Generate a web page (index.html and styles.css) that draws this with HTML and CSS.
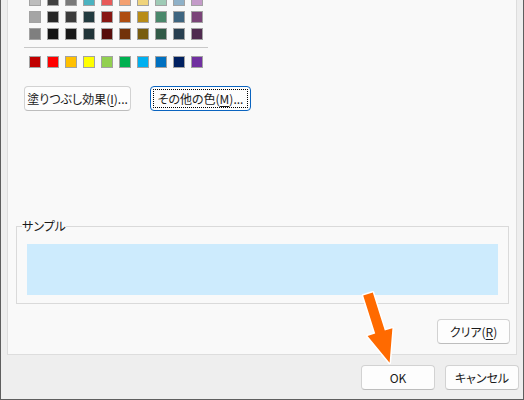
FILE: index.html
```html
<!DOCTYPE html>
<html lang="ja">
<head>
<meta charset="utf-8">
<title>色の設定</title>
<link rel="stylesheet" href="styles.css">
</head>
<body>
<div class="window">
  <div class="panel">
    <div class="swatches theme">
      <span class="sw" style="background:#bdbdbd"></span>
      <span class="sw" style="background:#404040"></span>
      <span class="sw" style="background:#7a7a7a"></span>
      <span class="sw" style="background:#4bb3c1"></span>
      <span class="sw" style="background:#e85a59"></span>
      <span class="sw" style="background:#f4a070"></span>
      <span class="sw" style="background:#f0d47c"></span>
      <span class="sw" style="background:#9fcbb6"></span>
      <span class="sw" style="background:#8fb1c8"></span>
      <span class="sw" style="background:#c49bc9"></span>

      <span class="sw" style="background-color:#a5a5a5"></span>
      <span class="sw" style="background-color:#262626"></span>
      <span class="sw" style="background-color:#3b3b3b"></span>
      <span class="sw pat" style="background-color:#1a3338"></span>
      <span class="sw" style="background-color:#871613"></span>
      <span class="sw" style="background-color:#ae4d10"></span>
      <span class="sw" style="background-color:#b88c17"></span>
      <span class="sw" style="background-color:#4a886b"></span>
      <span class="sw" style="background-color:#3e6580"></span>
      <span class="sw" style="background-color:#7a4478"></span>

      <span class="sw" style="background-color:#7f7f7f"></span>
      <span class="sw pat" style="background-color:#0a0a0a"></span>
      <span class="sw" style="background-color:#191919"></span>
      <span class="sw pat" style="background-color:#192d31"></span>
      <span class="sw" style="background-color:#560d0b"></span>
      <span class="sw" style="background-color:#72320a"></span>
      <span class="sw" style="background-color:#785c0f"></span>
      <span class="sw" style="background-color:#315a47"></span>
      <span class="sw" style="background-color:#283f50"></span>
      <span class="sw" style="background-color:#4f2b4f"></span>
    </div>
    <div class="divider"></div>
    <div class="swatches standard">
      <span class="sw" style="background:#c00000"></span>
      <span class="sw" style="background:#ff0000"></span>
      <span class="sw" style="background:#ffc000"></span>
      <span class="sw" style="background:#ffff00"></span>
      <span class="sw" style="background:#92d050"></span>
      <span class="sw" style="background:#00b050"></span>
      <span class="sw" style="background:#00b0f0"></span>
      <span class="sw" style="background:#0070c0"></span>
      <span class="sw" style="background:#002060"></span>
      <span class="sw" style="background:#7030a0"></span>
    </div>
    <div class="btn-row">
      <button class="btn fill-btn" type="button">塗りつぶし効果(<u>I</u>)...</button>
      <button class="btn more-btn focused" type="button">その他の色(<u>M</u>)...</button>
    </div>
    <fieldset class="sample">
      <legend>サンプル</legend>
      <div class="sample-fill"></div>
    </fieldset>
    <div class="clear-row">
      <button class="btn clear-btn" type="button">クリア(<u>R</u>)</button>
    </div>
  </div>
  <div class="footer">
    <button class="btn dlg-btn" type="button">OK</button>
    <button class="btn dlg-btn" type="button">キャンセル</button>
  </div>
  <svg class="arrow" width="524" height="400" viewBox="0 0 524 400" aria-hidden="true">
    <polygon points="363.2,295.5 372.8,292.5 384.8,330.6 392.4,328.2 389.6,362.7 367.6,336.0 375.2,333.6" fill="#ff6a00" stroke="#ffffff" stroke-width="3" stroke-linejoin="round" paint-order="stroke"/>
  </svg>
</div>
</body>
</html>
```

FILE: styles.css
```css
* {
  box-sizing: border-box;
}

html, body {
  margin: 0;
  padding: 0;
  background: #efefef;
}

body {
  font-family: "Noto Sans CJK JP", "Noto Sans", sans-serif;
  font-size: 12px;
  color: #1a1a1a;
  font-feature-settings: "palt";
}

.window {
  position: relative;
  width: 524px;
  height: 400px;
  background: #eeeeee;
  border-left: 1px solid #5e5e5e;
  border-right: 1px solid #5e5e5e;
  border-bottom: 1px solid #5e5e5e;
  display: flex;
  flex-direction: column;
  overflow: hidden;
}

.panel {
  margin-left: 6px;
  width: 510px;
  height: 355px;
  background: #f9f9f9;
  border: 1px solid #dddddd;
  border-top: none;
  display: flex;
  flex-direction: column;
  align-items: flex-start;
  overflow: hidden;
  flex: none;
}

.swatches {
  display: grid;
  grid-template-columns: repeat(10, 12px);
  grid-auto-rows: 12px;
  column-gap: 6px;
  row-gap: 5px;
  margin-left: 21px;
}

.theme {
  margin-top: -6px;
}

.standard {
  margin-top: 8px;
}

.sw {
  display: block;
  width: 12px;
  height: 12px;
  border: 1px solid #a2a2a2;
}

.pat {
  background-image: radial-gradient(circle, rgba(255, 255, 255, 0.12) 0.5px, transparent 0.8px);
  background-size: 2px 2px;
}

.divider {
  margin-top: 7px;
  margin-left: 16px;
  width: 184px;
  height: 1px;
  background: #c8c8c8;
}

.btn {
  font-family: inherit;
  font-size: 12px;
  font-feature-settings: "palt";
  color: #1a1a1a;
  background: #fdfdfd;
  border: 1px solid #d2d2d2;
  border-bottom-color: #bdbdbd;
  border-radius: 4px;
  height: 25px;
  padding: 0;
  line-height: 22px;
  display: flex;
  align-items: center;
  justify-content: center;
}

.btn u {
  text-underline-offset: 2px;
}

.btn-row {
  margin-top: 18px;
  margin-left: 16px;
  display: flex;
  gap: 19px;
}

.fill-btn {
  width: 107px;
}

.more-btn {
  width: 101px;
}

.focused {
  border: 1px solid #0a64c0;
  outline: 1px dotted #000000;
  outline-offset: -4px;
}

.sample {
  margin: 108px 0 0 8px;
  width: 493px;
  border: 1px solid #dadada;
  padding: 11px 10px 8px 10px;
  min-width: 0;
}

.sample legend {
  padding: 0;
  margin-left: -5px;
  line-height: 14px;
  font-size: 12px;
}

.sample-fill {
  height: 51px;
  background: #cdebfd;
}

.clear-row {
  align-self: stretch;
  display: flex;
  justify-content: flex-end;
  margin-top: 15px;
  padding-right: 6px;
}

.clear-btn {
  width: 73px;
}

.footer {
  display: flex;
  justify-content: flex-end;
  gap: 10px;
  padding-top: 10px;
  padding-right: 4px;
}

.dlg-btn {
  width: 74px;
}

.arrow {
  position: absolute;
  left: -1px;
  top: 0;
  pointer-events: none;
}
```
